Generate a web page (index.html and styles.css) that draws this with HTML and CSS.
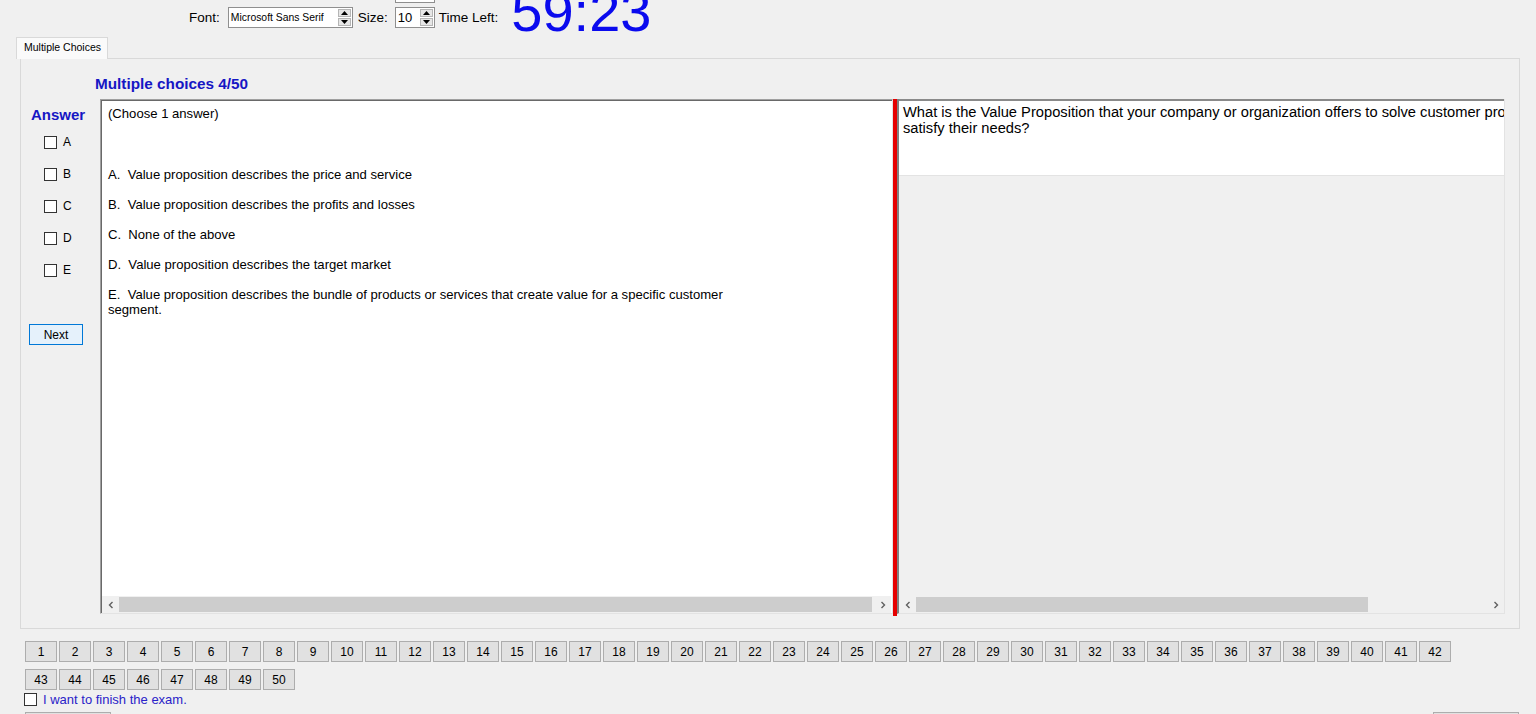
FILE: index.html
```html
<!DOCTYPE html>
<html lang="en">
<head>
<meta charset="utf-8">
<title>Exam</title>
<link rel="stylesheet" href="styles.css">
</head>
<body>
<div class="app">
  <header class="topbar">
    <span class="lbl lbl-font">Font:</span>
    <div class="spin spin-font">
      <span class="spin-val">Microsoft Sans Serif</span>
      <div class="spin-btns">
        <span class="sb"><svg width="7" height="4" viewBox="0 0 7 4"><polygon points="0,4 3.5,0 7,4" fill="#000"/></svg></span>
        <span class="sb"><svg width="7" height="4" viewBox="0 0 7 4"><polygon points="0,0 3.5,4 7,0" fill="#000"/></svg></span>
      </div>
    </div>
    <span class="lbl lbl-size">Size:</span>
    <div class="sizecol">
      <div class="ghost"></div>
      <div class="spin spin-size">
        <span class="spin-val size-val">10</span>
        <div class="spin-btns">
          <span class="sb"><svg width="7" height="4" viewBox="0 0 7 4"><polygon points="0,4 3.5,0 7,4" fill="#000"/></svg></span>
          <span class="sb"><svg width="7" height="4" viewBox="0 0 7 4"><polygon points="0,0 3.5,4 7,0" fill="#000"/></svg></span>
        </div>
      </div>
    </div>
    <span class="lbl lbl-time">Time Left:</span>
    <span class="clock">59:23</span>
  </header>

  <div class="tabs"><div class="tab">Multiple Choices</div></div>

  <section class="page">
    <h1 class="title">Multiple choices 4/50</h1>
    <div class="main">
      <aside class="answers">
        <div class="ans-h">Answer</div>
        <div class="opt"><span class="cb"></span>A</div>
        <div class="opt"><span class="cb"></span>B</div>
        <div class="opt"><span class="cb"></span>C</div>
        <div class="opt"><span class="cb"></span>D</div>
        <div class="opt"><span class="cb"></span>E</div>
        <button class="next">Next</button>
      </aside>

      <div class="qpanel">
        <div class="qtext">
          <p class="choose">(Choose 1 answer)</p>
          <p class="choice">A.&nbsp; Value proposition describes the price and service</p>
          <p class="choice">B.&nbsp; Value proposition describes the profits and losses</p>
          <p class="choice">C.&nbsp; None of the above</p>
          <p class="choice">D.&nbsp; Value proposition describes the target market</p>
          <p class="choice">E.&nbsp; Value proposition describes the bundle of products or services that create value for a specific customer<br>segment.</p>
        </div>
        <div class="hscroll">
          <span class="arrow"><svg width="8" height="8" viewBox="0 0 8 8"><polyline points="5.5,1 2.5,4 5.5,7" fill="none" stroke="#606060" stroke-width="1.4"/></svg></span>
          <span class="thumb thumb-left"></span>
          <span class="track"></span>
          <span class="arrow"><svg width="8" height="8" viewBox="0 0 8 8"><polyline points="2.5,1 5.5,4 2.5,7" fill="none" stroke="#606060" stroke-width="1.4"/></svg></span>
        </div>
      </div>

      <div class="splitter"></div>

      <div class="rpanel">
        <div class="rtop">What is the Value Proposition that your company or organization offers to solve customer problems and<br>satisfy their needs?</div>
        <div class="rfill"></div>
        <div class="hscroll">
          <span class="arrow"><svg width="8" height="8" viewBox="0 0 8 8"><polyline points="5.5,1 2.5,4 5.5,7" fill="none" stroke="#606060" stroke-width="1.4"/></svg></span>
          <span class="thumb thumb-right"></span>
          <span class="track"></span>
          <span class="arrow"><svg width="8" height="8" viewBox="0 0 8 8"><polyline points="2.5,1 5.5,4 2.5,7" fill="none" stroke="#606060" stroke-width="1.4"/></svg></span>
        </div>
      </div>
    </div>
  </section>

  <nav class="nums">
    <button class="num">1</button><button class="num">2</button><button class="num">3</button><button class="num">4</button><button class="num">5</button><button class="num">6</button><button class="num">7</button><button class="num">8</button><button class="num">9</button><button class="num">10</button>
    <button class="num">11</button><button class="num">12</button><button class="num">13</button><button class="num">14</button><button class="num">15</button><button class="num">16</button><button class="num">17</button><button class="num">18</button><button class="num">19</button><button class="num">20</button>
    <button class="num">21</button><button class="num">22</button><button class="num">23</button><button class="num">24</button><button class="num">25</button><button class="num">26</button><button class="num">27</button><button class="num">28</button><button class="num">29</button><button class="num">30</button>
    <button class="num">31</button><button class="num">32</button><button class="num">33</button><button class="num">34</button><button class="num">35</button><button class="num">36</button><button class="num">37</button><button class="num">38</button><button class="num">39</button><button class="num">40</button>
    <button class="num">41</button><button class="num">42</button><button class="num">43</button><button class="num">44</button><button class="num">45</button><button class="num">46</button><button class="num">47</button><button class="num">48</button><button class="num">49</button><button class="num">50</button>
  </nav>

  <label class="finish"><span class="cb"></span><span class="finish-txt">I want to finish the exam.</span></label>

  <div class="footer">
    <button class="fbtn" aria-label="Finish"></button>
    <button class="fbtn" aria-label="Close"></button>
  </div>
</div>
</body>
</html>
```

FILE: styles.css
```css
html, body {
  margin: 0;
  padding: 0;
}
body {
  background: #f0f0f0;
  font-family: "Liberation Sans", Arial, sans-serif;
  color: #000;
  height: 714px;
  overflow: hidden;
}

/* top toolbar */
.topbar {
  display: flex;
  align-items: center;
  height: 35px;
  margin-bottom: 2px;
  padding-left: 189px;
  font-size: 13.5px;
}
.lbl { line-height: 16px; white-space: nowrap; }
.lbl-font { margin-right: 8px; }
.lbl-size { margin-left: 5px; margin-right: 7px; }
.lbl-time { margin-left: 4px; }

.spin {
  display: flex;
  height: 21px;
  box-sizing: border-box;
  border: 1px solid #8f8f8f;
  background: #fff;
}
.spin-font { width: 125px; }
.spin-size { width: 40px; }
.spin-val {
  flex: 1;
  font-size: 10.4px;
  line-height: 19px;
  padding-left: 2px;
  white-space: nowrap;
  overflow: hidden;
}
.size-val { font-size: 13px; padding-left: 2px; }
.spin-btns {
  display: flex;
  flex-direction: column;
  width: 15px;
  padding: 1px;
  gap: 1px;
  box-sizing: border-box;
}
.sb {
  flex: 1;
  display: flex;
  align-items: center;
  justify-content: center;
  background: #e6e6e6;
  border: 1px solid #b5b5b5;
}
.sizecol {
  align-self: flex-start;
  display: flex;
  flex-direction: column;
  gap: 4px;
  margin-top: -15px;
}
.ghost {
  width: 40px;
  height: 18px;
  box-sizing: border-box;
  border: 1px solid #8f8f8f;
  background: #fff;
}
.clock {
  align-self: flex-start;
  margin-top: -16px;
  margin-left: 13px;
  font-size: 56px;
  line-height: 56px;
  color: #0a0aee;
}

/* tab strip */
.tabs {
  display: flex;
  height: 22px;
  padding-left: 16px;
  margin-bottom: -1px;
  position: relative;
  z-index: 1;
}
.tab {
  width: 92px;
  box-sizing: border-box;
  border: 1px solid #d9d9d9;
  border-bottom: none;
  background: #fafafa;
  font-size: 10.5px;
  line-height: 19px;
  padding-left: 7px;
  white-space: nowrap;
}

.page {
  margin-left: 20px;
  width: 1500px;
  height: 571px;
  box-sizing: border-box;
  border: 1px solid #d9d9d9;
  background: #f0f0f0;
}
.title {
  margin: 16px 0 0 74px;
  font-size: 15.3px;
  line-height: 18px;
  font-weight: bold;
  color: #1616c4;
}
.main {
  display: flex;
  margin-top: 6px;
  height: 515px;
}

/* answer column */
.answers {
  width: 79px;
  flex: none;
  padding-top: 7px;
  box-sizing: border-box;
  display: flex;
  flex-direction: column;
}
.ans-h {
  font-size: 15px;
  line-height: 18px;
  font-weight: bold;
  color: #1616c4;
  padding-left: 10px;
  margin-bottom: 2px;
}
.opt {
  display: flex;
  align-items: center;
  gap: 6px;
  height: 32px;
  padding-left: 23px;
  font-size: 12px;
}
.cb {
  width: 13px;
  height: 13px;
  flex: none;
  box-sizing: border-box;
  border: 1px solid #333;
  background: #fff;
}
.next {
  margin: 38px 0 0 8px;
  width: 54px;
  height: 21px;
  padding: 0;
  border: 1px solid #0078d7;
  background: #e5f1fb;
  font-family: "Liberation Sans", Arial, sans-serif;
  font-size: 12px;
  color: #000;
}

/* question panel */
.qpanel {
  width: 793px;
  flex: none;
  display: flex;
  flex-direction: column;
  box-sizing: border-box;
  background: #fff;
  border: 1px solid;
  border-color: #a0a0a0 #e3e3e3 #e3e3e3 #a0a0a0;
  box-shadow: inset 1px 1px 0 #696969;
}
.qtext {
  flex: 1;
  padding: 6px 7px;
  font-size: 13.1px;
  line-height: 15px;
}
.qtext p { margin: 0; }
.qtext .choose { margin-bottom: 46px; }
.qtext .choice { margin-bottom: 15px; }

.hscroll {
  display: flex;
  height: 17px;
  flex: none;
  background: #f0f0f0;
  margin-left: 1px;
}
.qpanel .hscroll { margin-right: 1px; }
.arrow {
  width: 17px;
  flex: none;
  display: flex;
  align-items: center;
  justify-content: center;
}
.thumb {
  flex: none;
  background: #cdcdcd;
  margin: 1px 0;
}
.thumb-left { width: 753px; }
.thumb-right { width: 452px; }
.track { flex: 1; }

.splitter {
  width: 4px;
  height: 517px;
  flex: none;
  align-self: flex-start;
  background: #e60000;
}

/* right panel */
.rpanel {
  width: 608px;
  flex: none;
  display: flex;
  flex-direction: column;
  box-sizing: border-box;
  border-left: 2px solid #808080;
  border-right: 1px solid #e3e3e3;
  border-bottom: 1px solid #e3e3e3;
}
.rtop {
  height: 77px;
  flex: none;
  box-sizing: border-box;
  background: #fff;
  border-top: 2px solid #8a8a8a;
  border-bottom: 1px solid #e3e3e3;
  padding: 3px 0 0 4px;
  font-size: 14.7px;
  line-height: 16px;
  white-space: nowrap;
  overflow: hidden;
}
.rfill { flex: 1; }
.rpanel .hscroll { margin-left: 0; }

/* question number buttons */
.nums {
  display: flex;
  flex-wrap: wrap;
  gap: 7px 2px;
  width: 1428px;
  margin: 12px 0 0 25px;
}
.num {
  width: 32px;
  height: 21px;
  padding: 0;
  box-sizing: border-box;
  border: 1px solid #adadad;
  background: #e1e1e1;
  font-family: "Liberation Sans", Arial, sans-serif;
  font-size: 12px;
  color: #000;
}

.finish {
  display: flex;
  align-items: center;
  gap: 6px;
  height: 13px;
  margin: 3px 0 0 24px;
}
.finish-txt {
  font-size: 13px;
  line-height: 13px;
  color: #2a22c8;
}

.footer {
  display: flex;
  justify-content: space-between;
  width: 1494px;
  margin: 6px 0 0 25px;
}
.fbtn {
  width: 86px;
  height: 23px;
  padding: 0;
  border: 1px solid #adadad;
  background: #e1e1e1;
}
```
